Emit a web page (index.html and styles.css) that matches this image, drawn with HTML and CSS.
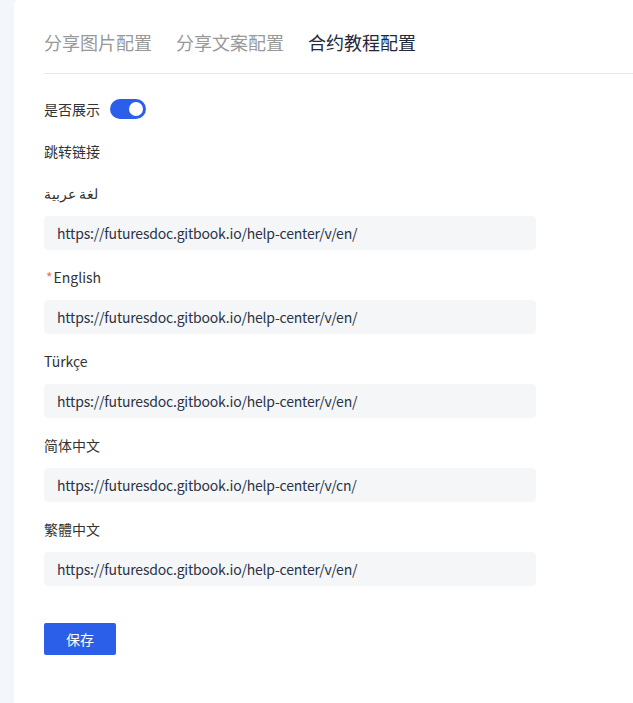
FILE: index.html
```html
<!DOCTYPE html>
<html lang="zh">
<head>
    <meta charset="UTF-8">
    <meta name="viewport" content="width=device-width, initial-scale=1.0">
    <title>合约教程配置</title>
    <link rel="stylesheet" href="styles.css">
</head>
<body>
    <div class="page">
        <div class="card">
            <div class="tabs">
                <span class="tab">分享图片配置</span>
                <span class="tab">分享文案配置</span>
                <span class="tab active">合约教程配置</span>
            </div>

            <div class="form">
                <div class="row">
                    <label>是否展示</label>
                    <span class="switch on"><span class="knob"></span></span>
                </div>
                <div class="title">跳转链接</div>

                <div class="field">
                    <label>لغة عربية</label>
                    <input type="text" value="https://futuresdoc.gitbook.io/help-center/v/en/">
                </div>
                <div class="field">
                    <label><span class="req">*</span>English</label>
                    <input type="text" value="https://futuresdoc.gitbook.io/help-center/v/en/">
                </div>
                <div class="field">
                    <label>Türkçe</label>
                    <input type="text" value="https://futuresdoc.gitbook.io/help-center/v/en/">
                </div>
                <div class="field">
                    <label>简体中文</label>
                    <input type="text" value="https://futuresdoc.gitbook.io/help-center/v/cn/">
                </div>
                <div class="field">
                    <label>繁體中文</label>
                    <input type="text" value="https://futuresdoc.gitbook.io/help-center/v/en/">
                </div>

                <button class="save">保存</button>
            </div>
        </div>
    </div>
</body>
</html>
```

FILE: styles.css
```css
body {
    margin: 0;
    background-color: #f3f6fa;
    font-family: "Noto Sans CJK SC", "Noto Sans", sans-serif;
    color: #333;
    overflow: hidden;
}
.page {
    display: flex;
    height: 703px;
    padding-left: 14px;
}
.card {
    flex: 1;
    background-color: #ffffff;
    border-top-left-radius: 5px;
    padding-left: 30px;
}
/* 頁籤 */
.tabs {
    display: flex;
    gap: 24px;
    height: 74px;
    align-items: center;
    padding-top: 10px;
    box-sizing: border-box;
    border-bottom: 1px solid #e8e8e8;
}
.tab {
    font-size: 18px;
    color: #999999;
    line-height: 24px;
}
.tab.active {
    color: #1f2a3c;
}
.form {
    width: 492px;
    padding-top: 24px;
}
.row {
    display: flex;
    align-items: center;
    gap: 10px;
    height: 22px;
}
label {
    font-size: 14px;
    line-height: 22px;
    color: #333;
}
.switch {
    width: 36px;
    height: 20px;
    border-radius: 10px;
    background-color: #2b5fe9;
    position: relative;
}
.switch .knob {
    position: absolute;
    top: 3px;
    right: 3px;
    width: 14px;
    height: 14px;
    border-radius: 50%;
    background-color: #ffffff;
}
.title {
    font-size: 14px;
    line-height: 22px;
    margin-top: 20px;
    margin-bottom: 20px;
}
.field {
    display: flex;
    flex-direction: column;
    gap: 12px;
    margin-bottom: 16px;
}
.req {
    color: #f56c6c;
    margin: 0 1px 0 2px;
}
input {
    height: 34px;
    border: none;
    border-radius: 4px;
    background-color: #f5f6f8;
    padding: 0 13px;
    font-family: inherit;
    font-size: 14px;
    letter-spacing: -0.2px;
    color: #2a3445;
    outline: none;
}
.save {
    margin-top: 21px;
    width: 72px;
    height: 32px;
    border: none;
    border-radius: 2px;
    background-color: #2b5fe9;
    color: #ffffff;
    font-family: inherit;
    font-size: 14px;
    cursor: pointer;
}
```
